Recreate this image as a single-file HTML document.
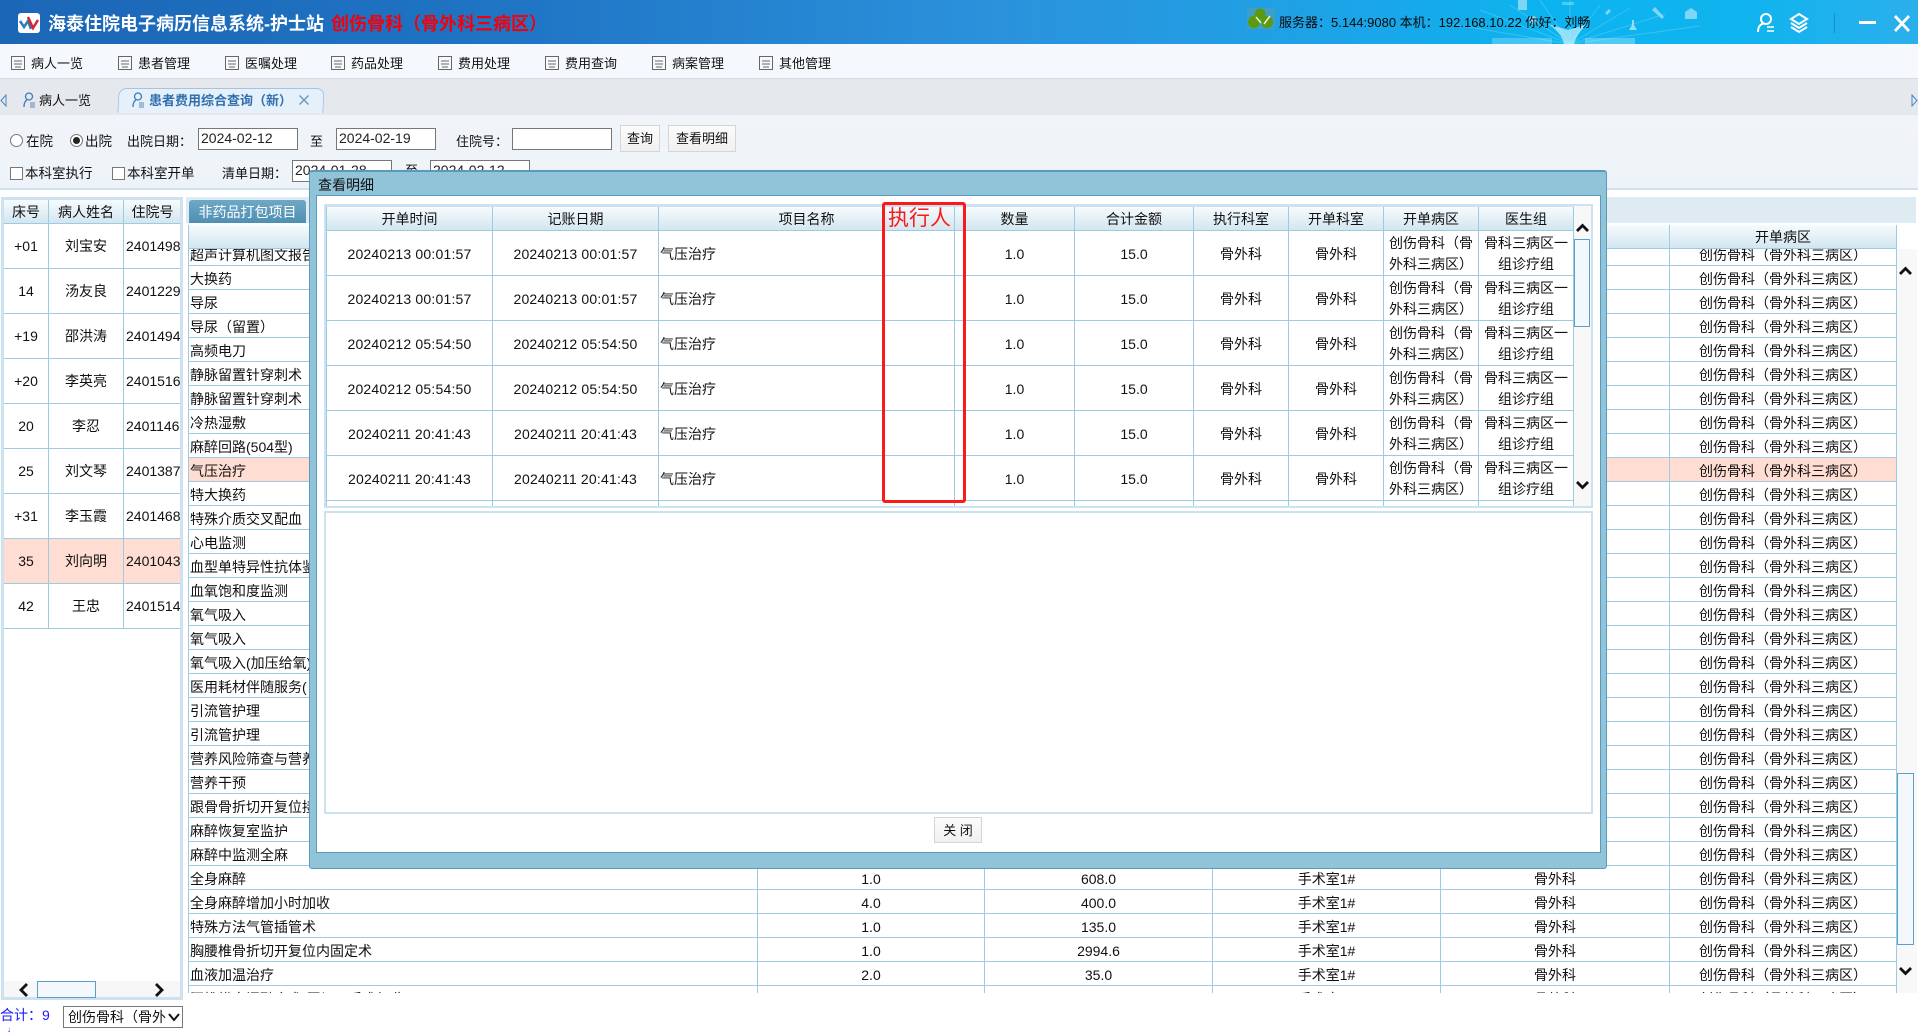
<!DOCTYPE html>
<html lang="zh-CN"><head><meta charset="utf-8"><title>海泰住院电子病历信息系统</title>
<style>
html,body{margin:0;padding:0;width:1918px;height:1033px;overflow:hidden;background:#fff}
body{font:14px/1.2 "Liberation Sans","WenQuanYi Zen Hei","Noto Sans CJK SC",sans-serif;color:#111;position:relative}
.a{position:absolute;white-space:nowrap}
.t{position:absolute;white-space:nowrap;line-height:20px}
.in{position:absolute;box-sizing:border-box;width:100px;height:22px;border:1px solid #777;background:#fff;font-size:14px;line-height:19px;padding-left:2px;color:#222}
.btn{position:absolute;box-sizing:border-box;height:27px;border:1px solid #d5d5d5;background:linear-gradient(#fbfbfb,#f0f0f0);text-align:center;font-size:13px;line-height:26px}
.m{position:absolute;top:54px;font-size:13px;line-height:20px;white-space:nowrap;padding-left:20px}
.m svg{position:absolute;left:0;top:2px}
table{border-collapse:separate;border-spacing:0;table-layout:fixed}
td{box-sizing:border-box;border-right:1px solid #9dcbe1;border-bottom:1px solid #9dcbe1;text-align:center;padding:0;overflow:hidden;white-space:nowrap;font-size:14px}
.h td{background:linear-gradient(#f6fbfd,#d3e6f0);height:24px;line-height:22px}
.bg td{height:24px;line-height:20px;padding-top:3px}
.bg td:first-child,.bg td.l{text-align:left;padding-left:1px}
.bg tr.p td{background:#ffddd2}
.lt td{height:45px;padding-top:1px}
.lt tr.h td{height:24px;padding-top:0}
.lt td.z{text-align:left;padding-left:2px}
.lt tr.p td{background:#ffddd2}
.dt td{height:45px;line-height:21px;padding-top:2px}
.dt td.d{letter-spacing:.2px}
.dt td.n{text-align:left;padding-left:1px}
.dt td.w{text-align:left;padding-left:5px}
</style></head><body>

<!-- title bar -->
<div class="a" style="left:0;top:0;width:1918px;height:44px;overflow:hidden;background:linear-gradient(90deg,#1c66b6 0,#1f74c4 500px,#2b92dc 1000px,#1fa1e6 1300px,#0cb4ef 1550px,#10b4ef 1750px,#2bafeb 1918px)">
<svg class="a" style="left:1300px;top:0" width="520" height="44">
<g stroke="#bfefff" stroke-width="1" opacity=".25" fill="none"><path d="M270 44L180 10M270 44L210 5M270 44L240 0M270 44L270 0M270 44L300 5M270 44L330 8M270 44L365 14M270 44L150 24M270 44L400 26"/></g>
<path d="M264 44C262 34 254 28 248 24L268 30L288 24C282 28 276 36 274 44Z" fill="#e8fbff" opacity=".6"/>
<g fill="#d8f3fc" opacity=".55"><rect x="218" y="0" width="9" height="10"/><rect x="192" y="38" width="60" height="6" opacity=".5"/><rect x="285" y="38" width="50" height="6" opacity=".6"/><circle cx="233" cy="20" r="4"/><rect x="262" y="2" width="12" height="3" opacity=".6"/><path d="M305 13l4-4 2 2-4 4zM352 10l3-3 9 10-2 2zM385 12l6-4 6 4v7h-12z"/><path d="M332 20l2 0 0 5 3 5h-8l3-5z" fill="#fff" opacity="1"/></g>
</svg>
<svg class="a" style="left:18px;top:13px" width="22" height="21"><rect width="22" height="20" rx="3" fill="#fff"/><path d="M2 8l4 6 4-6 3 8" stroke="#2a7fb8" stroke-width="2.500" fill="none"/><path d="M10 4l5 11 5-8" stroke="#d8262c" stroke-width="2.500" fill="none"/></svg>
<div class="a" style="left:48px;top:12px;font:bold 18px/24px 'Liberation Sans','Noto Sans CJK SC',sans-serif;color:#fff">海泰住院电子病历信息系统-护士站</div>
<div class="a" style="left:331px;top:12px;font:bold 18px/24px 'Liberation Sans','Noto Sans CJK SC',sans-serif;color:#f2000c">创伤骨科（骨外科三病区）</div>
<svg class="a" style="left:1247px;top:8px" width="28" height="21"><rect width="28" height="21" fill="#5a9fa8" opacity=".55"/><circle cx="13" cy="6" r="5.500" fill="#5c9a0c"/><circle cx="7" cy="14" r="6" fill="#5c9a0c"/><circle cx="20" cy="14" r="6" fill="#5c9a0c"/><path d="M9 9l5 6M23 8l-6 8" stroke="#e8f2d8" stroke-width="1.500"/></svg>
<div class="a" style="left:1279px;top:13px;font-size:13px;line-height:20px;color:#0a0a0a">服务器：5.144:9080 本机：192.168.10.22 你好：刘畅</div>
<svg class="a" style="left:1756px;top:12px" width="20" height="22" fill="none" stroke="#fff" stroke-width="2"><circle cx="10" cy="7" r="5"/><path d="M2 20c0-6 3-8 6-8.500"/><path d="M11 15h7M11 19h7" stroke-width="1.500"/></svg>
<svg class="a" style="left:1788px;top:12px" width="22" height="22" fill="none" stroke="#fff" stroke-width="2"><path d="M11 2l8 5-8 5-8-5zM3 11l8 5 8-5M3 15l8 5 8-5"/></svg>
<div class="a" style="left:1834px;top:13px;width:1px;height:20px;background:#1c8cc8"></div>
<div class="a" style="left:1859px;top:21px;width:17px;height:3px;background:#fff"></div>
<svg class="a" style="left:1893px;top:15px" width="18" height="17" stroke="#fff" stroke-width="2.800"><path d="M2 1l14 15M16 1L2 16"/></svg>
</div>

<!-- menu -->
<div class="a" style="left:0;top:44px;width:1918px;height:34px;background:#f5f9fd;border-bottom:1px solid #d5dbe6"></div>
<div class="m" style="left:11px"><svg width="14" height="14" fill="none" stroke="#666"><rect x=".5" y=".5" width="13" height="13"/><path d="M3 5h8M3 8h8M4 11h6"/></svg>病人一览</div>
<div class="m" style="left:118px"><svg width="14" height="14" fill="none" stroke="#666"><rect x=".5" y=".5" width="13" height="13"/><path d="M3 5h8M3 8h8M4 11h6"/></svg>患者管理</div>
<div class="m" style="left:225px"><svg width="14" height="14" fill="none" stroke="#666"><rect x=".5" y=".5" width="13" height="13"/><path d="M3 5h8M3 8h8M4 11h6"/></svg>医嘱处理</div>
<div class="m" style="left:331px"><svg width="14" height="14" fill="none" stroke="#666"><rect x=".5" y=".5" width="13" height="13"/><path d="M3 5h8M3 8h8M4 11h6"/></svg>药品处理</div>
<div class="m" style="left:438px"><svg width="14" height="14" fill="none" stroke="#666"><rect x=".5" y=".5" width="13" height="13"/><path d="M3 5h8M3 8h8M4 11h6"/></svg>费用处理</div>
<div class="m" style="left:545px"><svg width="14" height="14" fill="none" stroke="#666"><rect x=".5" y=".5" width="13" height="13"/><path d="M3 5h8M3 8h8M4 11h6"/></svg>费用查询</div>
<div class="m" style="left:652px"><svg width="14" height="14" fill="none" stroke="#666"><rect x=".5" y=".5" width="13" height="13"/><path d="M3 5h8M3 8h8M4 11h6"/></svg>病案管理</div>
<div class="m" style="left:759px"><svg width="14" height="14" fill="none" stroke="#666"><rect x=".5" y=".5" width="13" height="13"/><path d="M3 5h8M3 8h8M4 11h6"/></svg>其他管理</div>

<!-- tabs -->
<div class="a" style="left:0;top:79px;width:1918px;height:36px;background:#e5e9ee"></div>
<svg class="a" style="left:0;top:94px" width="7" height="13" fill="#dfe9f4" stroke="#4f86b8"><path d="M6 1L1 6.500 6 12z"/></svg>
<svg class="a" style="left:1911px;top:94px" width="7" height="13" fill="#dfe9f4" stroke="#4f86b8"><path d="M1 1l5 5.500L1 12z"/></svg>
<svg class="a" style="left:23px;top:92px" width="13" height="16" fill="none" stroke="#3c7cb8" stroke-width="1.300"><circle cx="6" cy="4.500" r="3.500"/><path d="M1 15c0-4 1-6 3-7"/><path d="M7 11h5M7 13h5M7 15h5" stroke="#7a9cc0"/></svg>
<div class="t" style="left:39px;top:91px;font-size:13px">病人一览</div>
<div class="a" style="left:118px;top:88px;width:204px;height:24px;background:#e6f0fb;border:1px solid #a5c4e2;border-bottom:0;border-radius:8px 8px 0 0;transform:skewX(-3deg)"></div>
<svg class="a" style="left:132px;top:92px" width="13" height="16" fill="none" stroke="#3c7cb8" stroke-width="1.300"><circle cx="6" cy="4.500" r="3.500"/><path d="M1 15c0-4 1-6 3-7"/><path d="M7 11h5M7 13h5M7 15h5" stroke="#7a9cc0"/></svg>
<div class="t" style="left:149px;top:91px;font-size:13px;font-weight:bold;color:#2f6fae;">患者费用综合查询（新）</div>
<svg class="a" style="left:298px;top:94px" width="12" height="12" fill="none" stroke="#6f93b8" stroke-width="1.300"><path d="M1.500 1.500l9 9M10.500 1.500l-9 9"/></svg>

<!-- filter -->
<div class="a" style="left:0;top:115px;width:1918px;height:75px;background:linear-gradient(#f1f5f9,#edf3f8);border-bottom:2px solid #cfe2ec;box-sizing:border-box"></div>
<svg class="a" style="left:10px;top:134px" width="13" height="13" fill="#fff" stroke="#777"><circle cx="6.500" cy="6.500" r="6"/></svg>
<div class="t" style="left:26px;top:132px;font-size:13.500px">在院</div>
<svg class="a" style="left:70px;top:134px" width="13" height="13" fill="#fff" stroke="#777"><circle cx="6.500" cy="6.500" r="6"/><circle cx="6.500" cy="6.500" r="3.500" fill="#222" stroke="none"/></svg>
<div class="t" style="left:85px;top:132px;font-size:13.500px">出院</div>
<div class="t" style="left:127px;top:132px;font-size:13px">出院日期：</div>
<div class="in" style="left:198px;top:128px">2024-02-12</div>
<div class="t" style="left:310px;top:132px;font-size:13px">至</div>
<div class="in" style="left:336px;top:128px">2024-02-19</div>
<div class="t" style="left:456px;top:132px;font-size:13px">住院号：</div>
<div class="in" style="left:512px;top:128px"></div>
<div class="btn" style="left:620px;top:125px;width:40px">查询</div>
<div class="btn" style="left:668px;top:125px;width:68px">查看明细</div>
<div class="a" style="left:10px;top:167px;width:11px;height:11px;border:1px solid #777;background:#fff"></div>
<div class="t" style="left:25px;top:164px;font-size:13.500px">本科室执行</div>
<div class="a" style="left:112px;top:167px;width:11px;height:11px;border:1px solid #777;background:#fff"></div>
<div class="t" style="left:127px;top:164px;font-size:13.500px">本科室开单</div>
<div class="t" style="left:222px;top:164px;font-size:13px">清单日期：</div>
<div class="in" style="left:292px;top:160px">2024-01-28</div>
<div class="t" style="left:405px;top:161px;font-size:13px">至</div>
<div class="in" style="left:430px;top:160px">2024-02-12</div>

<!-- left panel -->
<div class="a" style="left:1px;top:197px;width:182px;height:803px;box-sizing:border-box;border:3px solid #cde2ee;background:#fff;overflow:hidden">
<table class="lt" style="width:178px"><colgroup><col style="width:45px"><col style="width:75px"><col style="width:58px"></colgroup>
<tr class="h"><td>床号</td><td>病人姓名</td><td>住院号</td></tr>
<tr><td>+01</td><td>刘宝安</td><td class="z">2401498</td></tr>
<tr><td>14</td><td>汤友良</td><td class="z">2401229</td></tr>
<tr><td>+19</td><td>邵洪涛</td><td class="z">2401494</td></tr>
<tr><td>+20</td><td>李英亮</td><td class="z">2401516</td></tr>
<tr><td>20</td><td>李忍</td><td class="z">2401146</td></tr>
<tr><td>25</td><td>刘文琴</td><td class="z">2401387</td></tr>
<tr><td>+31</td><td>李玉霞</td><td class="z">2401468</td></tr>
<tr class="p"><td>35</td><td>刘向明</td><td class="z">2401043</td></tr>
<tr><td>42</td><td>王忠</td><td class="z">2401514</td></tr>
</table></div>
<div class="a" style="left:4px;top:981px;width:176px;height:16px;background:#f7f7f7"></div>
<div class="a" style="left:37px;top:981px;width:57px;height:15px;background:#f2f8fc;border:1px solid #5c9fc4"></div>
<svg class="a" style="left:19px;top:983px" width="10" height="14" fill="none" stroke="#111" stroke-width="2.800"><path d="M8 1L2 7l6 6"/></svg>
<svg class="a" style="left:154px;top:983px" width="10" height="14" fill="none" stroke="#111" stroke-width="2.800"><path d="M2 1l6 6-6 6"/></svg>
<div class="t" style="left:0;top:1005px;font-size:14px;color:#1a1aff">合计：9</div>
<div class="a" style="left:7px;top:1027px;font-size:8px;line-height:6px;color:#1a1aff">↓</div>
<div class="a" style="left:63px;top:1006px;width:120px;height:22px;box-sizing:border-box;border:1px solid #777;background:#fff;font-size:14px;line-height:20px;padding-left:4px;overflow:hidden">创伤骨科（骨外</div>
<div class="a" style="left:167px;top:1007px;width:15px;height:20px;background:#fff"></div>
<svg class="a" style="left:168px;top:1013px" width="12" height="9" fill="none" stroke="#111" stroke-width="2"><path d="M1 1l5 6 5-6"/></svg>

<!-- main panel -->
<div class="a" style="left:186px;top:197px;width:1730px;height:26px;background:#deebf2"></div>
<div class="a" style="left:189px;top:200px;width:117px;height:23px;border-radius:3px 3px 0 0;background:linear-gradient(#6ea8c6,#4e8fb3);color:#fff;font-size:14px;line-height:25px;text-align:center">非药品打包项目</div>
<div class="a" style="left:188px;top:225px;width:1709px;height:24px;overflow:hidden">
<table class="h" style="width:1709px;border-left:1px solid #9dcbe1;box-sizing:border-box"><colgroup><col style="width:569px"><col style="width:227px"><col style="width:228px"><col style="width:228px"><col style="width:229px"><col style="width:227px"></colgroup>
<tr><td>项目名称</td><td>数量</td><td>合计金额</td><td>执行科室</td><td>开单科室</td><td>开单病区</td></tr></table></div>
<div class="a" style="left:188px;top:249px;width:1709px;height:744px;overflow:hidden">
<table class="bg" style="width:1709px;margin-top:-7px;border-left:1px solid #9dcbe1;box-sizing:border-box"><colgroup><col style="width:569px"><col style="width:227px"><col style="width:228px"><col style="width:228px"><col style="width:229px"><col style="width:227px"></colgroup>
<tr><td>超声计算机图文报告</td><td></td><td></td><td></td><td></td><td>创伤骨科（骨外科三病区）</td></tr>
<tr><td>大换药</td><td></td><td></td><td></td><td></td><td>创伤骨科（骨外科三病区）</td></tr>
<tr><td>导尿</td><td></td><td></td><td></td><td></td><td>创伤骨科（骨外科三病区）</td></tr>
<tr><td>导尿（留置）</td><td></td><td></td><td></td><td></td><td>创伤骨科（骨外科三病区）</td></tr>
<tr><td>高频电刀</td><td></td><td></td><td></td><td></td><td>创伤骨科（骨外科三病区）</td></tr>
<tr><td>静脉留置针穿刺术</td><td></td><td></td><td></td><td></td><td>创伤骨科（骨外科三病区）</td></tr>
<tr><td>静脉留置针穿刺术</td><td></td><td></td><td></td><td></td><td>创伤骨科（骨外科三病区）</td></tr>
<tr><td>冷热湿敷</td><td></td><td></td><td></td><td></td><td>创伤骨科（骨外科三病区）</td></tr>
<tr><td>麻醉回路(504型)</td><td></td><td></td><td></td><td></td><td>创伤骨科（骨外科三病区）</td></tr>
<tr class="p"><td>气压治疗</td><td></td><td></td><td></td><td></td><td>创伤骨科（骨外科三病区）</td></tr>
<tr><td>特大换药</td><td></td><td></td><td></td><td></td><td>创伤骨科（骨外科三病区）</td></tr>
<tr><td>特殊介质交叉配血</td><td></td><td></td><td></td><td></td><td>创伤骨科（骨外科三病区）</td></tr>
<tr><td>心电监测</td><td></td><td></td><td></td><td></td><td>创伤骨科（骨外科三病区）</td></tr>
<tr><td>血型单特异性抗体鉴定</td><td></td><td></td><td></td><td></td><td>创伤骨科（骨外科三病区）</td></tr>
<tr><td>血氧饱和度监测</td><td></td><td></td><td></td><td></td><td>创伤骨科（骨外科三病区）</td></tr>
<tr><td>氧气吸入</td><td></td><td></td><td></td><td></td><td>创伤骨科（骨外科三病区）</td></tr>
<tr><td>氧气吸入</td><td></td><td></td><td></td><td></td><td>创伤骨科（骨外科三病区）</td></tr>
<tr><td>氧气吸入(加压给氧)</td><td></td><td></td><td></td><td></td><td>创伤骨科（骨外科三病区）</td></tr>
<tr><td>医用耗材伴随服务(</td><td></td><td></td><td></td><td></td><td>创伤骨科（骨外科三病区）</td></tr>
<tr><td>引流管护理</td><td></td><td></td><td></td><td></td><td>创伤骨科（骨外科三病区）</td></tr>
<tr><td>引流管护理</td><td></td><td></td><td></td><td></td><td>创伤骨科（骨外科三病区）</td></tr>
<tr><td>营养风险筛查与营养评估</td><td></td><td></td><td></td><td></td><td>创伤骨科（骨外科三病区）</td></tr>
<tr><td>营养干预</td><td></td><td></td><td></td><td></td><td>创伤骨科（骨外科三病区）</td></tr>
<tr><td>跟骨骨折切开复位接骨</td><td></td><td></td><td></td><td></td><td>创伤骨科（骨外科三病区）</td></tr>
<tr><td>麻醉恢复室监护</td><td></td><td></td><td></td><td></td><td>创伤骨科（骨外科三病区）</td></tr>
<tr><td>麻醉中监测全麻</td><td></td><td></td><td></td><td></td><td>创伤骨科（骨外科三病区）</td></tr>
<tr><td>全身麻醉</td><td>1.0</td><td>608.0</td><td>手术室1#</td><td>骨外科</td><td>创伤骨科（骨外科三病区）</td></tr>
<tr><td>全身麻醉增加小时加收</td><td>4.0</td><td>400.0</td><td>手术室1#</td><td>骨外科</td><td>创伤骨科（骨外科三病区）</td></tr>
<tr><td>特殊方法气管插管术</td><td>1.0</td><td>135.0</td><td>手术室1#</td><td>骨外科</td><td>创伤骨科（骨外科三病区）</td></tr>
<tr><td>胸腰椎骨折切开复位内固定术</td><td>1.0</td><td>2994.6</td><td>手术室1#</td><td>骨外科</td><td>创伤骨科（骨外科三病区）</td></tr>
<tr><td>血液加温治疗</td><td>2.0</td><td>35.0</td><td>手术室1#</td><td>骨外科</td><td>创伤骨科（骨外科三病区）</td></tr>
<tr><td>腰椎横突间融合术(同切二手术加收)</td><td>1.0</td><td>200.0</td><td>手术室1#</td><td>骨外科</td><td>创伤骨科（骨外科三病区）</td></tr>
</table></div>
<div class="a" style="left:1897px;top:249px;width:20px;height:744px;background:#f8f8f8"></div>
<div class="a" style="left:1897px;top:773px;width:17px;height:172px;background:#f2f8fc;border:1px solid #5c9fc4;box-sizing:border-box"></div>
<svg class="a" style="left:1899px;top:266px" width="13" height="10" fill="none" stroke="#111" stroke-width="2.800"><path d="M1 8l5.500-5.500L12 8"/></svg>
<svg class="a" style="left:1899px;top:966px" width="13" height="10" fill="none" stroke="#111" stroke-width="2.800"><path d="M1 2l5.500 5.500L12 2"/></svg>

<!-- dialog -->
<div class="a" style="left:309px;top:170px;width:1298px;height:699px;box-sizing:border-box;background:#91c3d9;border:1px solid #5a9bbd;border-radius:3px;border-top-width:2px"></div>
<div class="t" style="left:318px;top:175px;font-size:14px">查看明细</div>
<div class="a" style="left:316px;top:195px;width:1285px;height:658px;box-sizing:border-box;background:#fff;border:1px solid #5a9bbd"></div>
<div class="a" style="left:324px;top:204px;width:1269px;height:304px;box-sizing:border-box;border:2px solid #cde2ee;overflow:hidden;background:#fff">
<table class="h" style="width:1248px;border-left:1px solid #9dcbe1;border-top:1px solid #cde2ee"><colgroup><col style="width:166px"><col style="width:166px"><col style="width:296px"><col style="width:120px"><col style="width:119px"><col style="width:95px"><col style="width:95px"><col style="width:95px"><col style="width:95px"></colgroup>
<tr><td>开单时间</td><td>记账日期</td><td>项目名称</td><td>数量</td><td>合计金额</td><td>执行科室</td><td>开单科室</td><td>开单病区</td><td>医生组</td></tr></table>
<table class="dt" style="width:1248px;border-left:1px solid #9dcbe1"><colgroup><col style="width:166px"><col style="width:166px"><col style="width:296px"><col style="width:120px"><col style="width:119px"><col style="width:95px"><col style="width:95px"><col style="width:95px"><col style="width:95px"></colgroup>
<tr><td class="d">20240213 00:01:57</td><td class="d">20240213 00:01:57</td><td class="n">气压治疗</td><td>1.0</td><td>15.0</td><td>骨外科</td><td>骨外科</td><td class="w">创伤骨科（骨<br>外科三病区）</td><td>骨科三病区一<br>组诊疗组</td></tr>
<tr><td class="d">20240213 00:01:57</td><td class="d">20240213 00:01:57</td><td class="n">气压治疗</td><td>1.0</td><td>15.0</td><td>骨外科</td><td>骨外科</td><td class="w">创伤骨科（骨<br>外科三病区）</td><td>骨科三病区一<br>组诊疗组</td></tr>
<tr><td class="d">20240212 05:54:50</td><td class="d">20240212 05:54:50</td><td class="n">气压治疗</td><td>1.0</td><td>15.0</td><td>骨外科</td><td>骨外科</td><td class="w">创伤骨科（骨<br>外科三病区）</td><td>骨科三病区一<br>组诊疗组</td></tr>
<tr><td class="d">20240212 05:54:50</td><td class="d">20240212 05:54:50</td><td class="n">气压治疗</td><td>1.0</td><td>15.0</td><td>骨外科</td><td>骨外科</td><td class="w">创伤骨科（骨<br>外科三病区）</td><td>骨科三病区一<br>组诊疗组</td></tr>
<tr><td class="d">20240211 20:41:43</td><td class="d">20240211 20:41:43</td><td class="n">气压治疗</td><td>1.0</td><td>15.0</td><td>骨外科</td><td>骨外科</td><td class="w">创伤骨科（骨<br>外科三病区）</td><td>骨科三病区一<br>组诊疗组</td></tr>
<tr><td class="d">20240211 20:41:43</td><td class="d">20240211 20:41:43</td><td class="n">气压治疗</td><td>1.0</td><td>15.0</td><td>骨外科</td><td>骨外科</td><td class="w">创伤骨科（骨<br>外科三病区）</td><td>骨科三病区一<br>组诊疗组</td></tr>
<tr><td></td><td></td><td></td><td></td><td></td><td></td><td></td><td class="w">创伤骨科（骨</td><td>骨科三病区一</td></tr>
</table></div>
<!-- dialog scrollbar -->
<div class="a" style="left:1574px;top:206px;width:17px;height:300px;background:#f8f8f8"></div>
<div class="a" style="left:1574px;top:239px;width:16px;height:88px;box-sizing:border-box;background:#f2f8fc;border:1px solid #5c9fc4"></div>
<svg class="a" style="left:1576px;top:223px" width="13" height="10" fill="none" stroke="#111" stroke-width="2.800"><path d="M1 8l5.500-5.500L12 8"/></svg>
<svg class="a" style="left:1576px;top:480px" width="13" height="10" fill="none" stroke="#111" stroke-width="2.800"><path d="M1 2l5.500 5.500L12 2"/></svg>
<!-- lower empty panel -->
<div class="a" style="left:324px;top:511px;width:1269px;height:303px;box-sizing:border-box;border:2px solid #cde2ee;background:#fff"></div>
<div class="btn" style="left:934px;top:817px;width:48px;height:26px;font-size:13px">关 闭</div>
<!-- annotation -->
<div class="a" style="left:882px;top:202px;width:84px;height:301px;box-sizing:border-box;border:3px solid #fb1a1a;border-radius:3px"></div>
<div class="a" style="left:888px;top:205px;font-size:21px;line-height:28px;color:#fb1a1a">执行人</div>
</body></html>
